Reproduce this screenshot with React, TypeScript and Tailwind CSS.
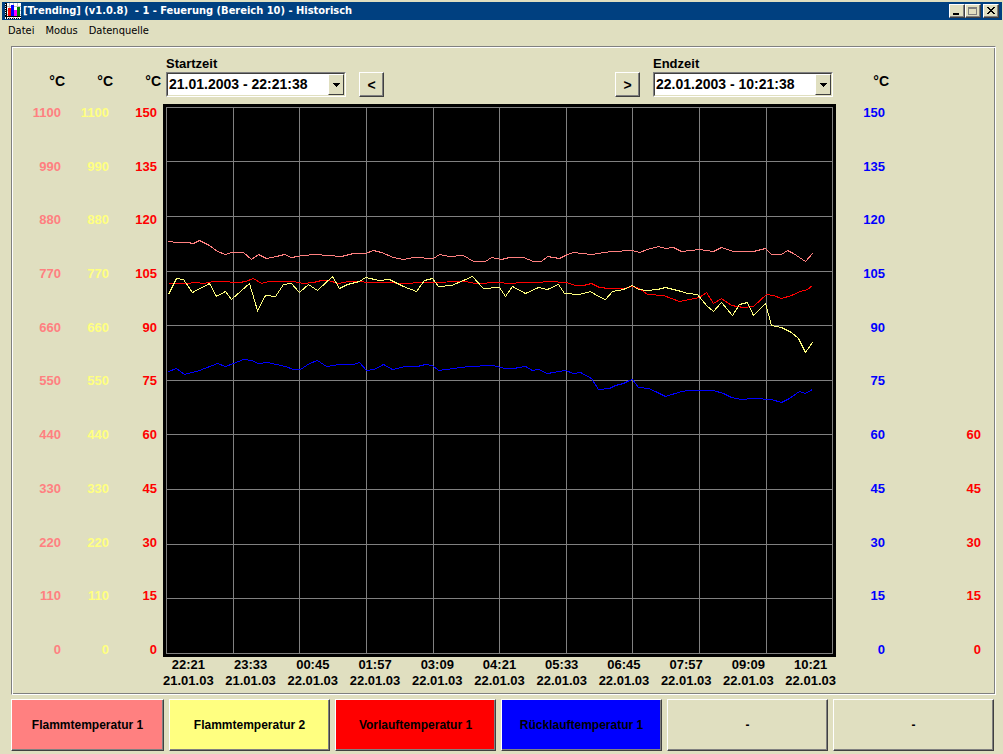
import { ReactNode } from "react"

const GRID_X = [3, 70, 136, 203, 270, 336, 403, 469, 536, 603, 669]
const GRID_Y = [3, 57, 112, 167, 221, 276, 330, 385, 440, 494, 549]

const series = [
    {
        color: "#ff0000",
        points: "5,179 24,179 32,178 40,179 50,177 62,177 70,178 76,178 82,177 90,174 98,179 105,177 130,177 140,179 150,178 158,176 165,176 175,179 185,177 216,178 228,178 235,179 265,178 302,177 312,179 336,178 345,179 360,178 375,178 385,177 403,178 412,181 420,181 428,179 436,183 446,184 460,184 469,182 476,184 484,190 500,191 508,194 516,197 526,195 536,193 543,188 550,199 558,194 568,201 580,203 590,202 603,190 610,191 618,194 628,191 637,187 644,185 649,181",
    },
    {
        color: "#ff8080",
        points: "5,137 14,138 24,138 30,139 36,136 46,141 54,147 62,150 68,148 80,148 88,155 95,150 103,154 113,152 121,150 128,153 140,151 152,150 178,152 190,149 202,149 210,146 218,148 230,153 240,155 250,153 270,154 276,150 286,152 300,151 310,157 322,157 328,153 338,155 346,153 360,153 370,157 378,157 384,152 396,154 404,150 410,148 428,150 448,147 469,146 476,148 484,145 495,142 502,144 510,143 518,147 536,145 550,147 558,143 570,147 590,147 602,144 608,150 618,150 624,146 630,149 642,157 649,149",
    },
    {
        color: "#ffff80",
        points: "5,190 13,174 20,175 29,188 46,179 53,192 62,187 68,195 86,179 94,206 102,191 112,192 120,180 128,179 136,188 145,180 154,186 169,172 176,184 184,180 196,177 202,173 216,176 226,175 240,182 253,187 261,176 269,174 275,182 288,181 300,176 309,172 320,184 336,183 342,192 349,182 362,189 375,183 384,185 395,180 401,189 416,190 427,187 435,192 442,195 449,187 460,185 469,181 475,185 484,186 494,185 502,183 518,187 524,189 534,190 543,201 550,207 558,198 569,211 576,200 584,198 590,211 602,199 608,221 618,223 628,228 635,234 642,248 649,238",
    },
    {
        color: "#0000ff",
        points: "5,267 13,264 21,270 36,266 54,259 62,262 70,259 80,255 88,256 95,259 104,258 122,262 130,265 137,265 146,259 154,256 163,262 176,260 190,260 196,258 203,266 211,265 220,260 229,265 242,262 254,262 262,260 269,261 275,266 290,264 305,262 329,261 342,264 350,264 362,262 369,266 375,265 384,269 402,266 410,269 417,268 428,274 435,285 446,284 452,281 460,279 466,276 469,275 475,283 485,284 492,287 502,292 518,287 526,286 550,286 560,289 568,293 578,295 590,294 608,295 618,298 626,294 636,287 642,289 649,285",
    },
]

const times = ["22:21", "23:33", "00:45", "01:57", "03:09", "04:21", "05:33", "06:45", "07:57", "09:09", "10:21"]

const raised = "border border-t-white border-l-white border-r-[#404040] border-b-[#404040]"

const scale = (step: number, count = 11) => Array.from({ length: count }).map((_, i) => (count - 1 - i) * step)

function Axis({ values, className, unit = true }: { values: number[]; className: string; unit?: boolean }) {
    return (
        <div className={`flex flex-col text-right ${className}`}>
            <div className="h-[58px] pt-[26px] text-[14px] leading-4 text-black">{unit && "°C"}</div>
            <div className="flex flex-1 flex-col justify-between pr-1 text-[13px] leading-4">
                {Array.from({ length: 11 - values.length }).map((_, i) => (
                    <div key={i} className="h-4" />
                ))}
                {values.map((value) => (
                    <div key={value}>{value}</div>
                ))}
            </div>
            <div className="h-9" />
        </div>
    )
}

function TimeSelect({ id, label, value }: { id: string; label: string; value: string }) {
    return (
        <div className="w-[180px]">
            <label htmlFor={id} className="block text-[13px] leading-4">{label}</label>
            <div className="relative border border-t-[#808080] border-l-[#808080] border-r-white border-b-white">
                <select
                    id={id}
                    className="block h-[23px] w-full appearance-none border border-[#404040] border-r-[#e0dfc0] border-b-[#e0dfc0] bg-white pl-px text-[14px] font-bold text-black"
                >
                    <option>{value}</option>
                </select>
                <span className={`pointer-events-none absolute top-px right-px bottom-px flex w-4 items-center justify-center bg-[#e0dfc0] ${raised}`}>
                    <svg width="7" height="4" shapeRendering="crispEdges">
                        <path d="M0 0h7v1h-1v1h-1v1h-1v1h-1v-1h-1v-1h-1v-1h-1z" />
                    </svg>
                </span>
            </div>
        </div>
    )
}

function StepButton({ children, label }: { children: ReactNode; label: string }) {
    return (
        <button
            aria-label={label}
            className={`h-[25px] w-[25px] text-[14px] leading-none font-bold shadow-[inset_-1px_-1px_0_#808080] ${raised}`}
        >
            {children}
        </button>
    )
}

function Chart() {
    return (
        <svg
            viewBox="0 0 673 553"
            preserveAspectRatio="none"
            shapeRendering="crispEdges"
            className="block h-0 min-h-full w-full bg-black"
        >
            <g fill="#808080">
                {GRID_X.map((x) => (
                    <rect key={x} x={x} y="3" width="1" height="547" />
                ))}
                {GRID_Y.map((y) => (
                    <rect key={y} x="3" y={y} width="667" height="1" />
                ))}
            </g>
            {series.map((s) => (
                <polyline key={s.color} points={s.points} fill="none" stroke={s.color} transform="translate(0.5 0.5)" />
            ))}
        </svg>
    )
}

function TitleBar() {
    const control = `flex h-[14px] w-4 items-center justify-center bg-[#e0dfc0] shadow-[inset_-1px_-1px_0_#808080] ${raised}`
    return (
        <header className="mt-0.5 mr-px ml-0.5 flex h-[18px] items-center bg-[#004080] pr-[3px] pl-[3px] text-white">
            <svg width="17" height="16" shapeRendering="crispEdges" className="mr-px">
                <rect width="16" height="16" fill="#fff" />
                <path d="M4.5 0v16M8.5 0v16M12.5 0v16M0 3.5h16M0 7.5h16M0 11.5h16" stroke="#c0c0c0" />
                <path d="M3 5h3v8h-3z" fill="#f00" />
                <path d="M6 2h3v11h-3z" fill="#00f" />
                <path d="M9 7h3v6h-3z" fill="#f0f" />
                <path d="M12 4h3v9h-3z" fill="#008000" />
                <path d="M1.5 0v16M0 13.5h16" stroke="#000" />
                <path d="M0.5 0v13M1 15h15" stroke="#000" strokeDasharray="1 1" />
            </svg>
            <h1 className="flex-1 font-['DejaVu_Sans_Condensed','DejaVu_Sans'] text-[11px] leading-4 font-bold whitespace-pre">
                [Trending] (v1.0.8)  - 1 - Feuerung (Bereich 10) - Historisch
            </h1>
            <button aria-label="Minimieren" className={control}>
                <svg width="12" height="10" shapeRendering="crispEdges"><path d="M2 7h6v2h-6z" /></svg>
            </button>
            <button aria-label="Maximieren" disabled className={control}>
                <svg width="12" height="10" shapeRendering="crispEdges">
                    <path d="M1.5 1.5h8v7h-8zM1 2.5h9" fill="none" stroke="#808080" />
                </svg>
            </button>
            <button aria-label="Schließen" className={`ml-0.5 ${control}`}>
                <svg width="12" height="10" shapeRendering="crispEdges">
                    <path d="M2 1h2v1h1v1h2v-1h1v-1h2v1h-1v1h-1v1h-1v1h1v1h1v1h1v1h-2v-1h-1v-1h-2v1h-1v1h-2v-1h1v-1h1v-1h1v-1h-1v-1h-1v-1h-1z" />
                </svg>
            </button>
        </header>
    )
}

export default function App() {
    const channels = [
        { name: "Flammtemperatur 1", className: "bg-[#ff8080]" },
        { name: "Flammtemperatur 2", className: "bg-[#ffff80]" },
        { name: "Vorlauftemperatur 1", className: "bg-[#ff0000]" },
        { name: "Rücklauftemperatur 1", className: "bg-[#0000ff]" },
        { name: "-", className: "" },
        { name: "-", className: "" },
    ]

    return (
        <div className="flex min-h-screen flex-col bg-[#e0dfc0] font-['Liberation_Sans',sans-serif] text-black">
            <TitleBar />
            <nav className="flex h-[26px] gap-[11px] pt-[3px] pl-2 font-['DejaVu_Sans_Condensed','DejaVu_Sans'] text-[11px] leading-4">
                <button className="h-4">Datei</button>
                <button className="h-4">Modus</button>
                <button className="h-4">Datenquelle</button>
            </nav>

            <main className="mr-[7px] ml-[11px] flex flex-1 border border-[#808080] border-r-white border-b-white font-bold shadow-[inset_1px_1px_0_#fff,inset_-1px_-1px_0_#808080]">
                <Axis values={scale(110)} className="w-[53px] text-[#ff8080]" />
                <Axis values={scale(110)} className="w-12 text-[#ffff80]" />
                <Axis values={scale(15)} className="w-12 text-[#ff0000]" />

                {/* Time range and plot */}
                <section className="ml-0.5 flex min-w-0 flex-1 flex-col">
                    <div className="flex h-[57px] items-end pr-[3px] pb-[7px] pl-[3px]">
                        <TimeSelect id="start" label="Startzeit" value="21.01.2003 - 22:21:38" />
                        <div className="ml-[13px] flex"><StepButton label="Zurück">&lt;</StepButton></div>
                        <div className="mr-[13px] ml-auto flex"><StepButton label="Vor">&gt;</StepButton></div>
                        <TimeSelect id="end" label="Endzeit" value="22.01.2003 - 10:21:38" />
                    </div>
                    <div className="flex-1">
                        <Chart />
                    </div>
                    <div className="flex h-[37px] justify-between text-center text-[13px] leading-4">
                        {times.map((time, i) => (
                            <div key={time}>
                                <div>{time}</div>
                                <div>{i < 2 ? "21" : "22"}.01.03</div>
                            </div>
                        ))}
                    </div>
                </section>

                <Axis values={scale(15)} className="w-[53px] text-[#0000ff]" />
                <Axis values={scale(15, 5)} unit={false} className="mr-[10px] w-24 text-[#ff0000]" />
            </main>

            {/* Channels */}
            <footer className="mt-1 mr-[9px] mb-[3px] ml-[11px] grid grid-cols-[153fr_161fr_161fr_161fr_161fr_161fr] gap-[5px] text-[12px] font-bold">
                {channels.map((channel, i) => (
                    <button
                        key={i}
                        className={`h-[52px] min-w-0 shadow-[inset_-1px_-1px_0_#808080] ${raised} ${channel.className}`}
                    >
                        {channel.name}
                    </button>
                ))}
            </footer>
        </div>
    )
}
